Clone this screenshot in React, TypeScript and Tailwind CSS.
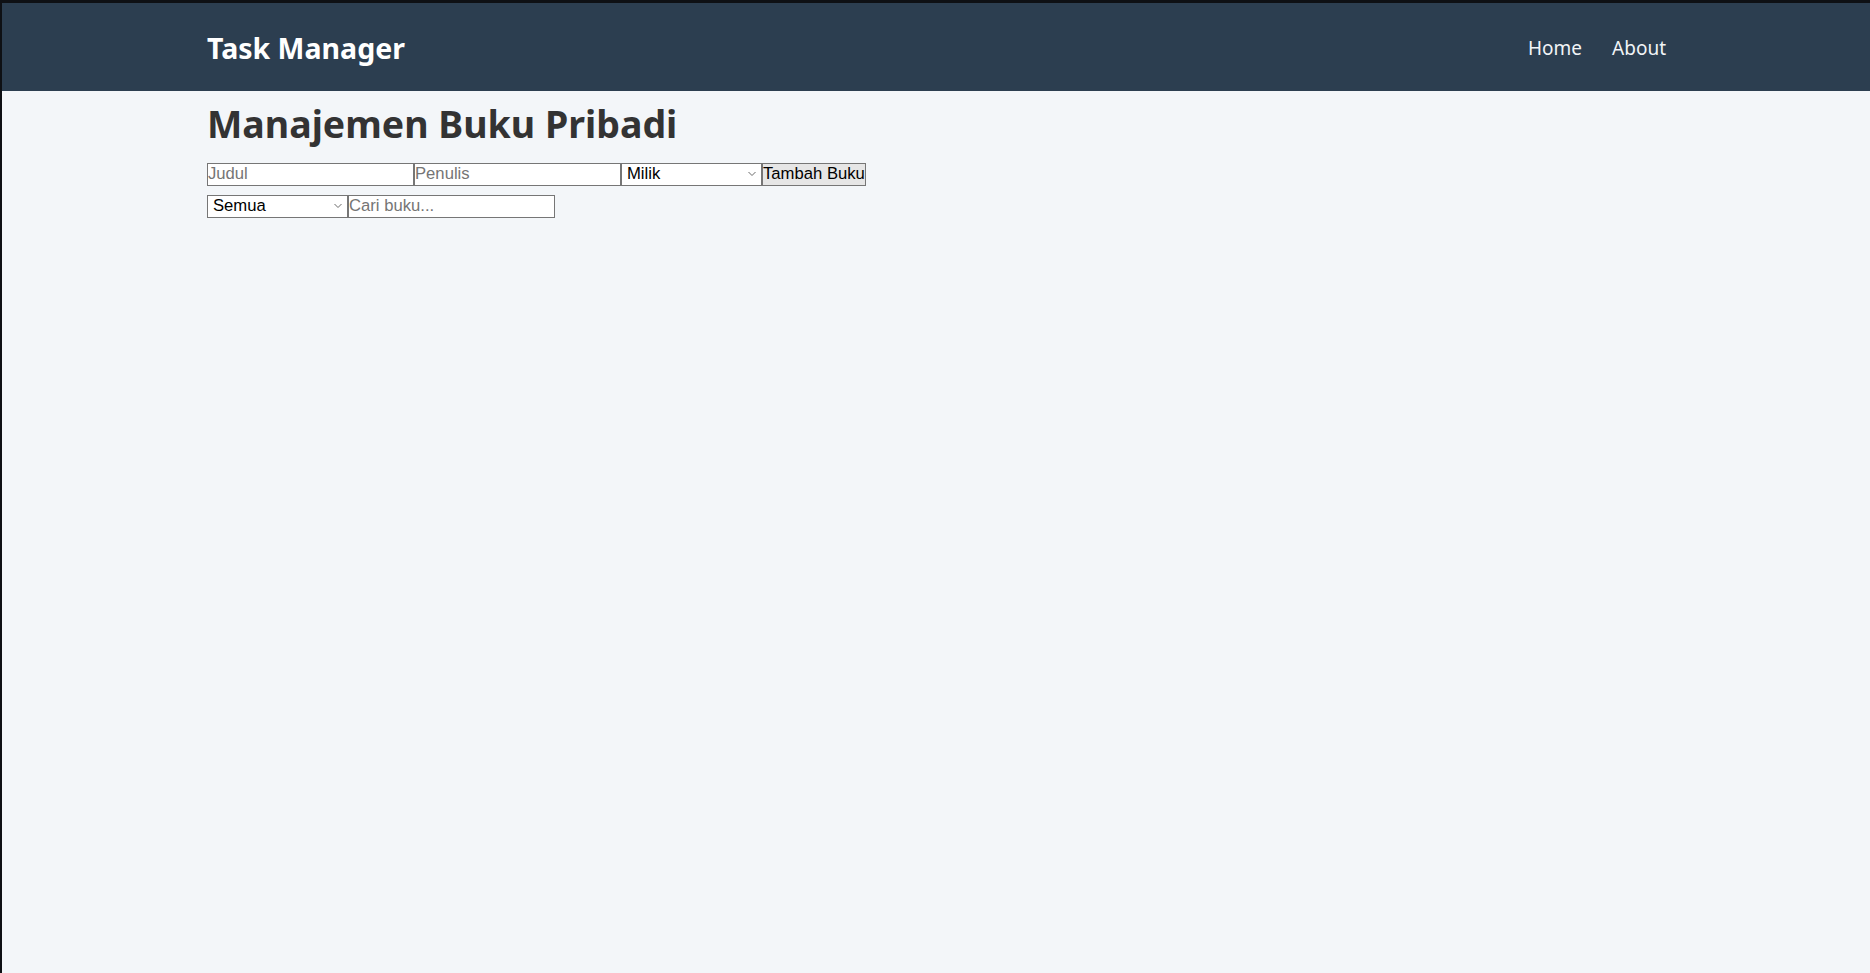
import React from "react";

function Chevron() {
  return (
    <svg
      className="pointer-events-none absolute right-[6px] top-1/2 -translate-y-1/2"
      width="8"
      height="5"
      viewBox="0 0 8 5"
      fill="none"
    >
      <path d="M0.5 0.5 L4 4 L7.5 0.5" stroke="#6b6b6b" strokeWidth="1" />
    </svg>
  );
}

const formFont = { fontFamily: '"Liberation Sans", Arial, sans-serif' };

function Select({ value, options }: { value: string; options: string[] }) {
  return (
    <div className="relative flex h-[23px] w-[141px]">
      <select
        defaultValue={value}
        className="h-[23px] w-full appearance-none border border-[#767676] bg-white pl-[5px] text-[16.67px] leading-none text-black outline-none"
        style={formFont}
      >
        {options.map((o) => (
          <option key={o}>{o}</option>
        ))}
      </select>
      <Chevron />
    </div>
  );
}

const inputCls =
  "h-[23px] w-[207px] border border-[#767676] bg-white px-0 text-[16.67px] leading-none text-black placeholder:text-[#757575] outline-none";

export default function App() {
  return (
    <div
      className="flex h-screen flex-col border-l-2 border-t-[3px] border-[#0e1014] bg-[#f3f6f9]"
      style={{ fontFamily: '"Noto Sans", "Open Sans", sans-serif' }}
    >
      <nav className="h-[88px] shrink-0 bg-[#2c3e50]">
        <div className="mx-auto flex h-full w-[1460px] items-center justify-between pl-px">
          <a className="mt-[2px] text-[28.5px] font-bold leading-none text-white">Task Manager</a>
          <div className="mt-[3px] flex items-center gap-[30px] text-[19px] leading-none text-[#f1f4f7]">
            <a>Home</a>
            <a>About</a>
          </div>
        </div>
      </nav>

      <main className="mx-auto w-[1460px] pl-px">
        <h1 className="mt-[14px] text-[37.5px] font-bold leading-none text-[#333333]">
          Manajemen Buku Pribadi
        </h1>

        <div className="mt-[20px] flex items-start">
          <input className={inputCls} placeholder="Judul" style={formFont} />
          <input className={inputCls} placeholder="Penulis" style={formFont} />
          <Select value="Milik" options={["Milik", "Dipinjam", "Wishlist"]} />
          <button
            className="h-[23px] border border-[#767676] bg-[#e6e6e6] px-0 pt-px text-[16.67px] leading-none text-black"
            style={formFont}
          >
            Tambah Buku
          </button>
        </div>

        <div className="mt-[9px] flex items-start">
          <Select value="Semua" options={["Semua", "Milik", "Dipinjam", "Wishlist"]} />
          <input className={inputCls} placeholder="Cari buku..." style={formFont} />
        </div>
      </main>
    </div>
  );
}
